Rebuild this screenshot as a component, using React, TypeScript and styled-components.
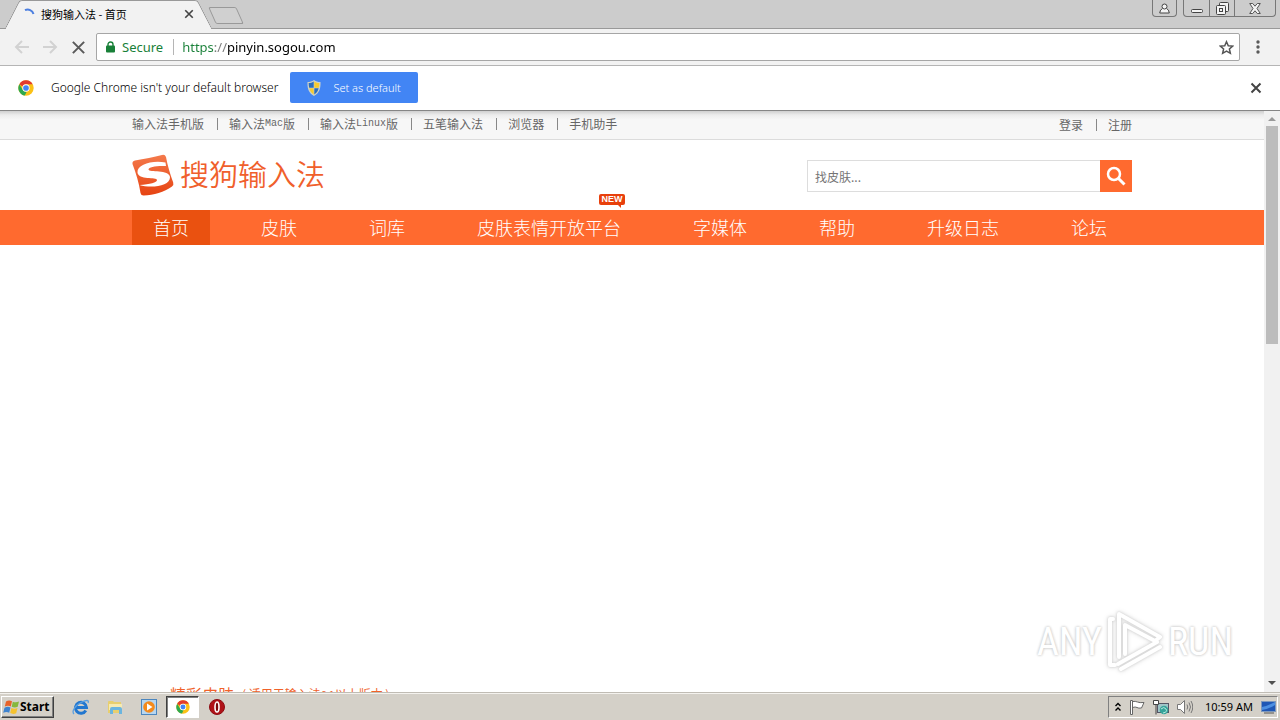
import React from "react";
import styled, { createGlobalStyle, css } from "styled-components";

const ui = `"Noto Sans", "Noto Sans CJK SC", sans-serif`;
const cjk = `"Noto Sans CJK SC", "Noto Sans", sans-serif`;

const GlobalStyle = createGlobalStyle`
  * { box-sizing: border-box; }
  body { margin: 0; background: #fff; font-family: ${ui}; }
  button, input { font: inherit; margin: 0; padding: 0; border: 0; background: none; color: inherit; outline: none; }
  a { color: inherit; text-decoration: none; }
  svg { display: block; flex: none; }
`;

const Screen = styled.div`
  display: flex;
  flex-direction: column;
  height: 100vh;
  overflow: hidden;
`;

/* ---------- browser window ---------- */

const TabStrip = styled.div`
  display: flex;
  flex: none;
  height: 29px;
  padding: 0 4px 0 12px;
  background: #cccccc;
  border-bottom: 1px solid #999;
`;

const Tab = styled.div`
  position: relative;
  display: flex;
  align-items: center;
  width: 193px;
  height: 29px;
  padding: 0 11px 2px 12px;
  font: 11px/16px ${cjk};
  color: #000;
  &::before, &::after {
    content: "";
    position: absolute;
    top: 0;
    bottom: 0;
    width: 60%;
    background: #f2f2f2;
    border-top: 1px solid #999;
  }
  &::before { left: 0; transform: skewX(-27deg); border-left: 1px solid #888; border-top-left-radius: 3px; }
  &::after { right: 0; transform: skewX(27deg); border-right: 1px solid #888; border-top-right-radius: 3px; }
  & > * { position: relative; z-index: 1; }
`;

const TabTitle = styled.span`
  flex: 1;
  margin-left: 5px;
  white-space: nowrap;
`;

const NewTab = styled.button`
  width: 28px;
  height: 17px;
  margin: 7px 0 0 7px;
  border: 1px solid #999;
  border-radius: 2px;
  background: #d0d0d0;
  transform: skewX(24deg);
`;

const WindowButtons = styled.div`
  display: flex;
  height: 17px;
  margin-left: auto;
  gap: 6px;
`;

const ButtonGroup = styled.div`
  display: flex;
  border: 1px solid #777;
  border-top: 0;
  border-radius: 0 0 4px 4px;
`;

const WindowButton = styled.button<{ $w: number }>`
  display: flex;
  align-items: center;
  justify-content: center;
  width: ${(p) => p.$w}px;
  & + & { border-left: 1px solid #777; }
`;

const Toolbar = styled.div`
  display: flex;
  flex: none;
  align-items: center;
  height: 37px;
  padding: 0 14px;
  background: #f2f2f2;
  border-bottom: 1px solid #b5b5b5;
`;

const IconButton = styled.button<{ $w?: number }>`
  display: flex;
  flex: none;
  align-items: center;
  justify-content: center;
  width: ${(p) => p.$w ?? 16}px;
  height: 20px;
`;

const NavButtons = styled.div`
  display: flex;
  gap: 12px;
`;

const Omnibox = styled.div`
  display: flex;
  flex: 1;
  align-items: center;
  height: 28px;
  margin: 0 10px;
  padding: 0 5px 0 9px;
  background: #fff;
  border: 1px solid #a6a6a6;
  border-radius: 2px;
  font-size: 13px;
  line-height: 20px;
`;

const Secure = styled.button`
  display: flex;
  align-items: center;
  gap: 7px;
  padding-right: 10px;
  color: #188038;
  border-right: 1px solid #b5b5b5;
  line-height: 16px;
`;

const UrlInput = styled.input`
  flex: 1;
  min-width: 0;
  margin-left: 8px;
  height: 20px;
  color: #000;
  background: linear-gradient(to right, #188038 0 33px, #777 33px 45px, #000 45px);
  background-clip: text;
  -webkit-background-clip: text;
  -webkit-text-fill-color: transparent;
`;

const InfoBar = styled.div`
  display: flex;
  flex: none;
  align-items: center;
  height: 45px;
  padding: 0 16px 0 18px;
  background: #fff;
  border-bottom: 1px solid #858585;
  font-size: 12px;
  line-height: 16px;
  color: #000;
`;

const InfoText = styled.span`
  margin-left: 17px;
  margin-right: 12px;
  font-family: "Noto Sans", sans-serif;
  font-weight: 300;
  white-space: nowrap;
`;

const DefaultButton = styled.button`
  display: flex;
  align-items: center;
  gap: 12px;
  height: 31px;
  padding: 0 17px;
  margin: 0 auto 1px 0;
  border-radius: 2px;
  background: #4285f4;
  color: #fff;
  font-family: "Noto Sans", sans-serif;
  font-weight: 300;
  font-size: 11px;
  white-space: nowrap;
`;

/* ---------- web page ---------- */

const Viewport = styled.div`
  position: relative;
  display: flex;
  flex: 1;
  min-height: 0;
`;

const Page = styled.div`
  flex: 1;
  min-width: 0;
  overflow: hidden;
  background: #fff;
  font-family: ${cjk};
`;

const TopBar = styled.div`
  height: 29px;
  border-bottom: 1px solid #dcdcdc;
  background: linear-gradient(#cfcfcf, #ececec 4px, #f7f7f7 9px);
`;

const Container = styled.div`
  display: flex;
  max-width: 1000px;
  margin: 0 auto;
`;

const LinkList = styled.div`
  display: flex;
  align-items: center;
  height: 26px;
  font-size: 12px;
  line-height: 16px;
  color: #666;
  &:last-child { margin-left: auto; height: 28px; }
`;

const TopLink = styled.a`
  display: flex;
  align-items: center;
  white-space: nowrap;
  & + &::before {
    content: "";
    width: 1px;
    height: 12px;
    margin: 0 11px 0 13px;
    background: #888;
  }
`;

const Latin = styled.span`
  font-family: "Liberation Mono", monospace;
  font-size: 10px;
`;

const Header = styled(Container)`
  align-items: center;
  height: 70px;
`;

const Brand = styled.a`
  display: flex;
  align-items: center;
  gap: 6px;
  color: #f05f2c;
  font-size: 29px;
  line-height: 36px;
  font-weight: 350;
  white-space: nowrap;
  span { padding-bottom: 4px; }
`;

const Search = styled.form`
  display: flex;
  width: 325px;
  height: 32px;
  margin: 2px 0 0 auto;
`;

const SearchInput = styled.input`
  flex: 1;
  min-width: 0;
  padding: 1px 7px 0;
  border: 1px solid #ddd;
  border-right: 0;
  font-size: 12px;
  color: #757575;
  &::placeholder { color: #757575; opacity: 1; }
`;

const SearchButton = styled.button`
  display: flex;
  align-items: center;
  justify-content: center;
  width: 32px;
  background: #ff6a2f;
`;

const NavBar = styled.nav`
  background: #ff6a2f;
`;

const NavList = styled(Container)`
  gap: 30px;
`;

const NavLink = styled.a<{ $active?: boolean }>`
  position: relative;
  height: 35px;
  padding: 0 21px;
  font-size: 18px;
  line-height: 35px;
  font-weight: 300;
  color: #fff;
  white-space: nowrap;
  ${(p) => p.$active && css`background: #ea5110;`}
`;

const NewBadge = styled.span`
  position: absolute;
  top: -16px;
  right: 17px;
  width: 26px;
  height: 11px;
  border-radius: 2px;
  background: #e8400c;
  font: bold 9px/11px "Liberation Sans", sans-serif;
  text-align: center;
  &::after {
    content: "";
    position: absolute;
    right: 4px;
    bottom: -3px;
    border: 2px solid transparent;
    border-top-color: #e8400c;
    border-right-color: #e8400c;
  }
`;

const Banner = styled.div`
  height: 437px;
`;

const SectionTitle = styled.h2`
  display: flex;
  align-items: center;
  width: 100%;
  margin: 0;
  padding-left: 38px;
  gap: 8px;
  color: #f0622a;
  font-size: 16px;
  line-height: 24px;
  font-weight: 400;
  white-space: nowrap;
  small { font-size: 12px; line-height: 16px; }
  small span { font-size: 10px; }
`;

const ScrollBar = styled.div`
  display: flex;
  flex-direction: column;
  align-items: center;
  width: 16px;
  background: #f1f1f1;
`;

const ScrollThumb = styled.div`
  width: 12px;
  height: 218px;
  margin-bottom: auto;
  background: #bcbcbc;
`;

const ScrollArrow = styled.button<{ $down?: boolean }>`
  display: flex;
  align-items: center;
  justify-content: center;
  width: 16px;
  height: ${(p) => (p.$down ? 18 : 15)}px;
  color: ${(p) => (p.$down ? "#505050" : "#999")};
`;

const Watermark = styled.div`
  position: absolute;
  right: 47px;
  bottom: 18px;
  display: flex;
  align-items: center;
  gap: 4px;
  font: 38px/64px "Liberation Sans Narrow", "Roboto Condensed", "Liberation Sans", sans-serif;
  color: #fff;
  text-shadow: 0 0 3px #c4c4c4, 0 0 3px #ddd;
  svg { filter: drop-shadow(0 0 1px #d0d0d0) drop-shadow(0 0 2px #ddd); }
`;

/* ---------- taskbar ---------- */

const Taskbar = styled.footer`
  display: flex;
  flex: none;
  align-items: center;
  height: 28px;
  padding: 1px 2px 0 1px;
  background: #d4d0c8;
  border-top: 1px solid #c0bcb4;
  box-shadow: inset 0 1px #f4f2ee;
  color: #000;
`;

const StartButton = styled.button`
  display: flex;
  align-items: center;
  width: 53px;
  height: 22px;
  padding-left: 1px;
  border: 1px solid;
  border-color: #fff #404040 #404040 #fff;
  box-shadow: inset -1px -1px #808080;
  font: bold 12px/16px "Noto Sans", sans-serif;
`;

const Launchers = styled.div`
  display: flex;
  margin-left: 10px;
  gap: 1px;
`;

const Launcher = styled.button<{ $open?: boolean }>`
  display: flex;
  align-items: center;
  justify-content: center;
  width: 33px;
  height: 22px;
  ${(p) => p.$open && css`
    background: #fff;
    border: 1px solid;
    border-color: #404040 #fff #fff #404040;
    box-shadow: inset 1px 1px #808080;
  `}
`;

const Tray = styled.div`
  display: flex;
  align-items: center;
  gap: 8px;
  height: 22px;
  margin-left: auto;
  padding: 0 1px 0 6px;
  border: 1px solid;
  border-color: #808080 #fff #fff #808080;
  font: 11px/16px "Noto Sans", sans-serif;
  white-space: nowrap;
`;

const Clock = styled.time`
  margin-left: 4px;
`;

/* ---------- drawings ---------- */

const ChromeIcon = ({ size }: { size: number }) => (
  <svg width={size} height={size} viewBox="0 0 48 48">
    <circle cx="24" cy="24" r="23" fill="#fbc116" />
    <path d="M4 12.5A23 23 0 0 1 44 12.8H24a11 11 0 0 0-10.2 7z" fill="#e33b2e" />
    <path d="M4 12.5 14 29.5A11 11 0 0 0 26 35L20.500 46.700A23 23 0 0 1 4 12.500z" fill="#2da94f" />
    <circle cx="24" cy="24" r="11" fill="#fff" />
    <circle cx="24" cy="24" r="8.500" fill="#4285f4" />
  </svg>
);

const Spinner = () => (
  <svg width="12" height="12" viewBox="0 0 12 12" fill="none" stroke="#4c7fe0" strokeWidth="2">
    <path d="M1 2.200A6 6 0 0 1 9.500 6" />
  </svg>
);

const Cross = ({ size, color, width }: { size: number; color: string; width: number }) => (
  <svg width={size} height={size} viewBox="0 0 12 12" stroke={color} strokeWidth={width}>
    <path d="M1.500 1.500l9 9M10.500 1.500l-9 9" />
  </svg>
);

const Arrow = ({ flip }: { flip?: boolean }) => (
  <svg width="16" height="16" viewBox="0 0 16 16" fill="none" stroke="#d2d2d2" strokeWidth="2">
    <path d={flip ? "M1 8h13M8 2l6 6-6 6" : "M15 8H2M8 2L2 8l6 6"} />
  </svg>
);

const Shield = () => (
  <svg width="14" height="16" viewBox="0 0 14 16">
    <path d="M7 0C5 1.500 3 2 .5 2c-.3 6 1 11 6.500 14 5.500-3 6.800-8 6.500-14C11 2 9 1.500 7 0z" fill="#cdd2c8" />
    <path d="M6.700 1.500C5 2.700 3.500 3 1.700 3.100c0 1.800.1 3.300.5 4.600h4.500z" fill="#2b6dbd" />
    <path d="M7.300 1.500c1.700 1.200 3.200 1.500 5 1.600 0 1.800-.1 3.300-.5 4.600H7.300z" fill="#f7cb2d" />
    <path d="M2.400 8.300h4.300v6.200C4.500 13.200 3 11 2.400 8.300z" fill="#f7cb2d" />
    <path d="M11.600 8.300H7.300v6.200c2.200-1.300 3.700-3.500 4.300-6.200z" fill="#2b6dbd" />
  </svg>
);

const SogouLogo = () => (
  <svg width="42" height="42" viewBox="0 0 42 42">
    <defs>
      <linearGradient id="sogou" x1="0" y1="0" x2="0" y2="1">
        <stop offset="0" stopColor="#f47a4c" />
        <stop offset="1" stopColor="#e64312" />
      </linearGradient>
    </defs>
    <path d="M3 6.500C12 5 22 3 30 1q3-.8 4 2c1.500 8 4 17 7.200 25.500q.8 2.500-1.200 4C32 38 22 41 11.500 41.500q-2.500 0-3-2.500C7 29 4 19 .5 10Q0 7 3 6.500z" fill="url(#sogou)" />
    <path d="M33.500 8.500C20 6 5 10.500 5.500 18.500c.5 7.500 19.500 4.500 19.500 7.500 0 2.500-7 4.500-17.500 5 11 3.500 31 1.500 30.500-8-.5-7.500-21.500-4.500-21.500-7.500 0-2.500 8-4 17.500-3.500z" fill="#fff" />
  </svg>
);

const WindowsFlag = () => (
  <svg width="17" height="17" viewBox="0 0 17 17">
    <path d="M3 2.500Q6 .8 9 2.300L7.800 7.500Q5 6 1.800 7.600z" fill="#e8632a" />
    <path d="M9.800 2.700q3 1.300 6.200-.2l-1.300 5.300q-3 1.400-6-.1z" fill="#86b83c" />
    <path d="M1.500 8.700Q4.700 7 7.500 8.500L6.200 13.700q-2.800-1.500-6 .1z" fill="#3f83cf" />
    <path d="M8.400 8.900q3 1.400 6.100.1l-1.300 5.200q-3 1.400-6-.1z" fill="#f5c22f" />
  </svg>
);

const topLinks: [string, string?, string?][] = [
  ["输入法手机版"],
  ["输入法", "Mac", "版"],
  ["输入法", "Linux", "版"],
  ["五笔输入法"],
  ["浏览器"],
  ["手机助手"],
];

const navItems = ["首页", "皮肤", "词库", "皮肤表情开放平台", "字媒体", "帮助", "升级日志", "论坛"];

export default function App() {
  return (
    <Screen>
      <GlobalStyle />
      <TabStrip>
        <Tab>
          <Spinner />
          <TabTitle>搜狗输入法 - 首页</TabTitle>
          <button aria-label="Close tab"><Cross size={10} color="#444" width={2} /></button>
        </Tab>
        <NewTab aria-label="New tab" />
        <WindowButtons>
          <ButtonGroup>
            <WindowButton $w={23} aria-label="Profile">
              <svg width="11" height="11" viewBox="0 0 11 11" fill="#f4f4f4" stroke="#444">
                <path d="M3.500 5.500Q1 6.500.7 10h9.600Q10 6.500 7.500 5.500" />
                <circle cx="5.500" cy="3.500" r="2.500" />
              </svg>
            </WindowButton>
          </ButtonGroup>
          <ButtonGroup>
            <WindowButton $w={25} aria-label="Minimize">
              <svg width="12" height="12" viewBox="0 0 12 12" fill="#f4f4f4" stroke="#444">
                <rect x=".5" y="7.500" width="11" height="3" rx="1" />
              </svg>
            </WindowButton>
            <WindowButton $w={25} aria-label="Restore">
              <svg width="13" height="13" viewBox="0 0 13 13" fill="#f4f4f4" stroke="#444">
                <rect x="3.500" y=".5" width="9" height="9" rx="1" />
                <rect x=".5" y="3.500" width="9" height="9" rx="1" />
                <rect x="3.500" y="6.500" width="3" height="3" />
              </svg>
            </WindowButton>
            <WindowButton $w={41} aria-label="Close">
              <svg width="12" height="11" viewBox="0 0 12 11" fill="#f4f4f4" stroke="#555">
                <path d="M.7.500h3L6 3.200 8.300.500h3L8 5.500l3.300 5h-3L6 7.800l-2.300 2.700h-3L4 5.500z" />
              </svg>
            </WindowButton>
          </ButtonGroup>
        </WindowButtons>
      </TabStrip>

      <Toolbar>
        <NavButtons>
          <IconButton aria-label="Back"><Arrow /></IconButton>
          <IconButton aria-label="Forward"><Arrow flip /></IconButton>
          <IconButton aria-label="Stop"><Cross size={15} color="#5a5a5a" width={1.6} /></IconButton>
        </NavButtons>
        <Omnibox>
          <Secure>
            <svg width="9" height="12" viewBox="0 0 9 12">
              <path d="M2 5V3.500a2.500 2.500 0 0 1 5 0V5" fill="none" stroke="#188038" strokeWidth="1.400" />
              <rect y="4.500" width="9" height="7" rx="1" fill="#188038" />
            </svg>
            Secure
          </Secure>
          <UrlInput aria-label="Address" defaultValue="https://pinyin.sogou.com" />
          <IconButton aria-label="Bookmark this page">
            <svg width="15" height="15" viewBox="0 0 16 16" fill="none" stroke="#555" strokeWidth="1.600">
              <path d="M8 1.800l1.900 4.300 4.700.4-3.500 3.100 1 4.600L8 11.800l-4.100 2.400 1-4.600L1.400 6.500l4.700-.4z" />
            </svg>
          </IconButton>
        </Omnibox>
        <IconButton aria-label="Menu">
          <svg width="4" height="14" viewBox="0 0 4 14" fill="#5a5a5a">
            <circle cx="2" cy="2" r="1.700" />
            <circle cx="2" cy="7" r="1.700" />
            <circle cx="2" cy="12" r="1.700" />
          </svg>
        </IconButton>
      </Toolbar>

      <InfoBar>
        <ChromeIcon size={16} />
        <InfoText>Google Chrome isn't your default browser</InfoText>
        <DefaultButton><Shield />Set as default</DefaultButton>
        <IconButton $w={16} aria-label="Dismiss"><Cross size={12} color="#444" width={2} /></IconButton>
      </InfoBar>

      <Viewport>
        <Page>
          <TopBar>
            <Container>
              <LinkList>
                {topLinks.map(([a, b, c], i) => (
                  <TopLink href="#" key={i}>{a}{b && <Latin>{b}</Latin>}{c}</TopLink>
                ))}
              </LinkList>
              <LinkList>
                <TopLink href="#">登录</TopLink>
                <TopLink href="#">注册</TopLink>
              </LinkList>
            </Container>
          </TopBar>
          <Header as="header">
            <Brand href="#"><SogouLogo /><span>搜狗输入法</span></Brand>
            <Search>
              <SearchInput aria-label="找皮肤" placeholder="找皮肤..." />
              <SearchButton type="button" aria-label="搜索">
                <svg width="20" height="20" viewBox="0 0 20 20" fill="none" stroke="#fff" strokeWidth="2.500">
                  <circle cx="8" cy="8" r="6" />
                  <path d="M12.500 12.500l6 6" strokeWidth="3" />
                </svg>
              </SearchButton>
            </Search>
          </Header>
          <NavBar>
            <NavList>
              {navItems.map((t, i) => (
                <NavLink href="#" key={t} $active={i === 0}>
                  {t}
                  {i === 3 && <NewBadge>NEW</NewBadge>}
                </NavLink>
              ))}
            </NavList>
          </NavBar>
          <Banner />
          <Container>
            <SectionTitle>精彩皮肤 <small>( 适用于输入法<span>6.1</span>以上版本 )</small></SectionTitle>
          </Container>
        </Page>
        <ScrollBar>
          <ScrollArrow aria-label="Scroll up">
            <svg width="8" height="4" viewBox="0 0 8 4" fill="currentColor"><path d="M0 4l4-4 4 4z" /></svg>
          </ScrollArrow>
          <ScrollThumb />
          <ScrollArrow $down aria-label="Scroll down">
            <svg width="8" height="4" viewBox="0 0 8 4" fill="currentColor"><path d="M0 0l4 4 4-4z" /></svg>
          </ScrollArrow>
        </ScrollBar>
        <Watermark>
          ANY
          <svg width="58" height="64" viewBox="0 0 58 64" fill="none" stroke="#fff" strokeWidth="4" strokeLinejoin="round" strokeLinecap="round">
            <path d="M13 47V4l41 23-5 4-30-16v29" />
            <path d="M7 9H4v46h5" />
            <path d="M12 54l39-22M15 59l39-22" />
          </svg>
          RUN
        </Watermark>
      </Viewport>

      <Taskbar>
        <StartButton><WindowsFlag />Start</StartButton>
        <Launchers>
          <Launcher aria-label="Internet Explorer">
            <svg width="18" height="16" viewBox="0 0 18 16" fill="none">
              <path d="M13.800 11.500A5.500 5.500 0 1 1 14.500 8.500H5" stroke="#2277cf" strokeWidth="3" />
              <path d="M2 15C-1 12 4 6 9 3.500S17.500.5 16 4" stroke="#5b9fe0" strokeWidth="1.300" />
            </svg>
          </Launcher>
          <Launcher aria-label="Explorer">
            <svg width="16" height="15" viewBox="0 0 16 15">
              <path d="M1 2q0-1 1-1h4l1 1h7v11H1z" fill="#e8cf6e" />
              <path d="M2 4h13v6H2z" fill="#f7eab0" />
              <path d="M3 14V9q0-2 2-2h8q2 0 2 2v5h-3v-4H6v4z" fill="#6bb5df" />
            </svg>
          </Launcher>
          <Launcher aria-label="Media Player">
            <svg width="16" height="16" viewBox="0 0 16 16">
              <rect x=".5" y=".5" width="15" height="15" fill="#b7d6f0" stroke="#4c86be" />
              <circle cx="8" cy="8" r="5.800" fill="#f48a1c" />
              <path d="M6 4.500l5.500 3.500L6 11.500z" fill="#fff" />
            </svg>
          </Launcher>
          <Launcher $open aria-label="Chrome"><ChromeIcon size={14} /></Launcher>
          <Launcher aria-label="Opera">
            <svg width="16" height="16" viewBox="0 0 16 16">
              <circle cx="8" cy="8" r="7.500" fill="#b01218" stroke="#8d0c12" />
              <ellipse cx="8" cy="8" rx="2" ry="5" fill="#7c070a" stroke="#fff" strokeWidth="1.600" />
            </svg>
          </Launcher>
        </Launchers>
        <Tray>
          <svg width="6" height="10" viewBox="0 0 6 10" fill="none" stroke="#000" strokeWidth="1.400">
            <path d="M.5 4L3 1.500 5.500 4M.5 8.500L3 6l2.500 2.500" />
          </svg>
          <svg width="16" height="15" viewBox="0 0 16 15" fill="#fff" stroke="#666">
            <path d="M3.500 1.500q3-.5 5 .5t6.500.5l-2.500 5.500q-3 .5-4.500-.5t-4.500 0" />
            <path d="M1.500.5h2v14h-2z" />
          </svg>
          <svg width="16" height="15" viewBox="0 0 16 15">
            <rect x="4.500" y="3.500" width="11" height="9" fill="#9fc6c8" stroke="#556" />
            <circle cx="11" cy="10" r="4.300" fill="#35a39a" />
            <path d="M8 9q3-3 5 0t-3 4" fill="none" stroke="#b9ecdf" />
            <path d="M.5.500h5v4h-5zM3 4.500v10" fill="#fff" stroke="#444" />
          </svg>
          <svg width="16" height="14" viewBox="0 0 16 14" fill="#fff" stroke="#777">
            <path d="M.5 4.500h3l4-4v13l-4-4h-3z" />
            <path d="M10 4.500q1.500 2.500 0 5M12 2.500q3 4.500 0 9M14 1q3.500 6 0 12" fill="none" />
          </svg>
          <Clock>10:59 AM</Clock>
          <svg width="15" height="13" viewBox="0 0 15 13">
            <rect x=".5" y=".5" width="14" height="10" fill="#1f57b5" stroke="#7d98bd" />
            <path d="M1 6q6-1 13-5v3Q8 8 1 9z" fill="#4d90e2" />
            <path d="M3 12h10" stroke="#555" />
          </svg>
        </Tray>
      </Taskbar>
    </Screen>
  );
}
